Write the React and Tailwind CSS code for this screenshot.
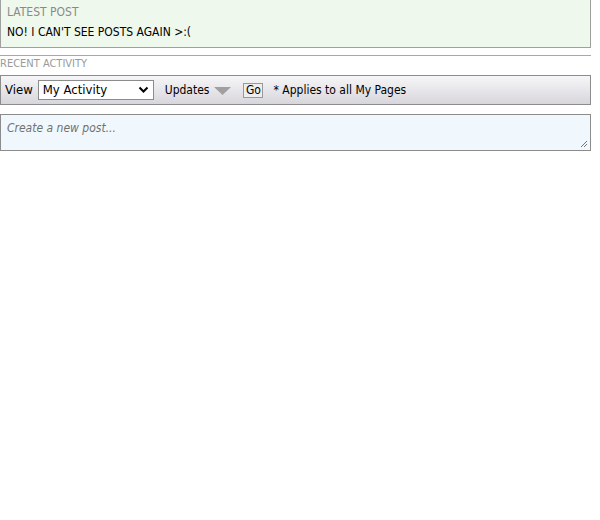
export default function App() {
  const font = { fontFamily: '"DejaVu Sans Condensed", "DejaVu Sans", sans-serif' };
  return (
    <div className="w-[591px] text-[12px] text-black" style={font}>
      <div className="bg-[#eef8ec] border-x border-b border-[#a0a0a0] px-[6px] pt-[5px] pb-[8px] h-[48px]">
        <div className="text-[#8a8a8a] text-[12px] leading-[15px]">LATEST POST</div>
        <div className="mt-[5px] leading-[15px]">NO! I CAN'T SEE POSTS AGAIN &gt;:(</div>
      </div>
      <div className="mt-[7px] border-t border-[#a8a8a8]"></div>
      <div className="text-[#9a9a9a] text-[11px] leading-[13px] mt-[1px]">RECENT ACTIVITY</div>
      <div className="mt-[5px] h-[30px] border border-[#8c8c8c] bg-gradient-to-b from-[#f6f6f8] to-[#d8d6dc] flex items-center px-[4px] text-[13px]">
        <span>View</span>
        <div className="ml-[5px] w-[116px] h-[20px] bg-white border border-[#8c8c8c] flex items-center justify-between pl-[4px] pr-[4px]">
          <span>My Activity</span>
          <svg width="11" height="8" viewBox="0 0 11 8"><path d="M1.5 1.5 L5.5 5.5 L9.5 1.5" fill="none" stroke="#000" strokeWidth="2" /></svg>
        </div>
        <span className="ml-[11px] text-[12px]">Updates</span>
        <svg className="ml-[5px] mt-[2px]" width="17" height="8" viewBox="0 0 17 8"><path d="M0 0 H17 L8.5 8 Z" fill="#a0a0a0" /></svg>
        <span className="ml-[12px] w-[20px] h-[15px] flex items-center justify-center border border-[#999] bg-[#eeeeee] text-[12px]">Go</span>
        <span className="ml-[10px] text-[12px]">* Applies to all My Pages</span>
      </div>
      <div className="mt-[9px] h-[37px] border border-[#8c8c8c] bg-[#f0f8fd] relative px-[6px] pt-[4px]">
        <span className="italic text-[#707070] text-[12px]">Create a new post...</span>
        <svg className="absolute right-[2px] bottom-[2px]" width="8" height="8" viewBox="0 0 8 8"><path d="M7 1 L1 7 M7 4 L4 7" stroke="#777" strokeWidth="1" /></svg>
      </div>
    </div>
  );
}
